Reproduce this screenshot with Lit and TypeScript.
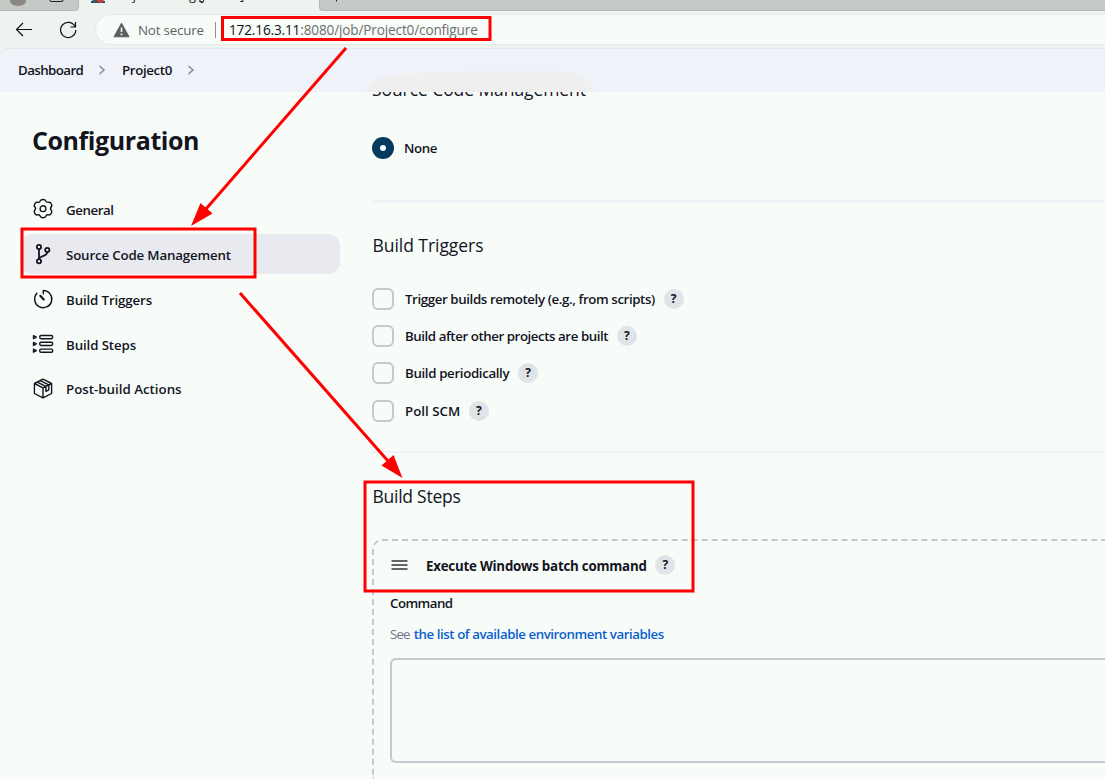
import { LitElement, html, css, svg } from "lit";
import { customElement } from "lit/decorators.js";

const gear = svg`<path d="M11 1.2c1.3 0 2.2.3 2.5 1.1.5 1.5 1.5 2 3 1.700 1.100-.2 1.800.2 2.500 1.500.8 1.300.8 2.200 0 3-1.100 1.300-1.100 2.200 0 3.500.8.9.8 1.800 0 3.100-.7 1.200-1.500 1.700-2.500 1.500-1.500-.3-2.500.2-3 1.700-.3.800-1.200 1.200-2.500 1.200s-2.200-.4-2.500-1.200c-.5-1.500-1.500-2-3-1.700-1 .2-1.800-.3-2.500-1.500-.8-1.300-.8-2.200 0-3.100 1.100-1.300 1.100-2.200 0-3.500-.8-.8-.8-1.700 0-3 .7-1.300 1.400-1.700 2.500-1.500 1.500.3 2.500-.2 3-1.700.3-.8 1.200-1.100 2.500-1.100z" transform="translate(-.3 .3) scale(1.030 1)"/><circle cx="11" cy="10.700" r="2.900"/>`;
const branch = svg`<g stroke-width="1.800"><circle cx="7" cy="4" r="2.100"/><circle cx="7" cy="18.200" r="2.100"/><circle cx="15.300" cy="7" r="2.100"/><path d="M7 6.100v10M15.300 9.200c0 4-5 2.800-8.300 6"/></g>`;
const timer = svg`<path d="M11.300 5.800V2.500a8.600 8.600 0 1 1-6.400 2.800"/><path d="M8.300 7.800l3.400 3.700" stroke-width="2.200"/>`;
const steps = svg`<path d="M1.500 2.600l2.800 1.500-2.800 1.500zM1.500 9.400l2.800 1.500-2.800 1.500zM1.500 16.200l2.800 1.500-2.800 1.500z"/><rect x="7.700" y="2.500" width="13" height="3.200" rx="1.400"/><rect x="7.700" y="9.300" width="13" height="3.200" rx="1.400"/><rect x="7.700" y="16.100" width="13" height="3.200" rx="1.400"/>`;
const box = svg`<path d="M11 2.200l8.600 4.300v10L11 20.900l-8.600-4.400v-10zM2.400 6.500L11 10.800l8.600-4.300M11 10.800v10.100M5.200 5.100l8.700 4.300M8.100 3.600l8.700 4.300v5l-2.900 1.500V9.400"/>`;

const menu = [
  { label: "General", icon: gear, cls: "k44" },
  { label: "Source Code Management", icon: branch, cls: "k16 on" },
  { label: "Build Triggers", icon: timer, cls: "k14" },
  { label: "Build Steps", icon: steps, cls: "k12" },
  { label: "Post-build Actions", icon: box, cls: "" },
];
const triggers = [
  { label: "Trigger builds remotely (e.g., from scripts)", cls: "k40" },
  { label: "Build after other projects are built", cls: "k44" },
  { label: "Build periodically", cls: "k36" },
  { label: "Poll SCM", cls: "" },
];

@customElement("browser-chrome")
class BrowserChrome extends LitElement {
  static styles = css`
    :host { display: block; background: #eef3ef; height: 48px; flex: none; font: 400 13.3px/20px "Open Sans", sans-serif; color: #5f625f; }
    .tabs { display: flex; height: 11px; overflow: hidden; }
    .idle { background: #c6cac6; box-sizing: border-box; border-bottom: 1px solid #b6bab6; flex: none; }
    .left { width: 79px; border-right: 1px solid #b6bab6; border-radius: 0 0 4px 0; }
    .right { flex: 1; border-left: 1px solid #b6bab6; border-radius: 0 0 0 4px; }
    .tab { width: 240px; flex: none; display: flex; color: #1a1c1a; }
    .tab svg { margin-left: 12px; flex: none; }
    .title { margin: -15px 0 0 9px; white-space: nowrap; font-size: 12.800px; letter-spacing: -.6px; }
    svg { display: block; }
    .bar { display: flex; height: 37px; box-sizing: border-box; padding: 3px 0 2px 14px; }
    .bar > svg { margin-top: 6px; flex: none; }
    .reload { margin-left: 22px; }
    .pill { margin-left: 15px; flex: 1; height: 31px; box-sizing: border-box; border: 1px solid #e6eae7; border-right: 0; border-radius: 16px 0 0 16px; background: #f8fcf9; display: flex; align-items: center; padding-left: 17px; white-space: nowrap; }
    .ns { margin-left: 8px; width: 77px; letter-spacing: -.15px; }
    .sep { width: 1px; height: 16px; background: #8d918e; }
    .url { margin-left: 13px; font-size: 13.6px; letter-spacing: -.15px; color: #6d706d; }
    .url b { font-weight: 400; color: #111; }
  `;
  render() {
    return html`
      <div class="tabs">
        <div class="idle left"><svg width="78" height="10"><ellipse cx="18" cy="1" rx="8" ry="5" fill="#8a8785"/><path d="M50 0q0 1.500 2 1.500h9q2 0 2-1.500" fill="none" stroke="#222" stroke-width="1.200"/></svg></div>
        <div class="tab">
          <svg width="14" height="4"><path d="M0 3V1l3-1h8l3 1v2z" fill="#35506b"/><path d="M5 0h7v2l-2 1-3-1z" fill="#c8402f"/></svg>
          <span class="title">Project0 Config [Jenkins]</span>
        </div>
        <div class="idle right"><svg width="40" height="4"><path d="M16.500 0v1.500" stroke="#222"/></svg></div>
      </div>
      <div class="bar">
        <svg width="20" height="20" fill="none" stroke="#111" stroke-width="1.200"><path d="M18 9.500H2.500M9 3L2.500 9.500 9 16"/></svg>
        <svg class="reload" width="24" height="20" fill="none" stroke="#111" stroke-width="1.200"><path d="M19 6.500a7.600 7.600 0 1 0 .8 3.500M19.500 2v5h-5"/></svg>
        <div class="pill">
          <svg width="17" height="16"><path d="M8.500 1.200L16 14.800H1z" fill="#5c605d" stroke="#5c605d" stroke-linejoin="round"/><path d="M8.500 5.500v4.500M8.500 11.500v1.800" stroke="#f8fcf9" stroke-width="1.600"/></svg>
          <span class="ns">Not secure</span><i class="sep"></i>
          <span class="url"><b>172.16.3.11</b>:8080/job/Project0/configure</span>
        </div>
      </div>`;
  }
}

@customElement("help-badge")
class HelpBadge extends LitElement {
  static styles = css`
    :host { display: block; flex: none; width: 20px; height: 20px; border-radius: 50%; background: #e0e3e7; color: #14141f; font: 700 12px/20px "Open Sans", sans-serif; text-align: center; }
  `;
  render() { return html`?`; }
}

@customElement("app-root")
class AppRoot extends LitElement {
  static styles = css`
    :host { display: flex; flex-direction: column; position: relative; width: 1105px; height: 779px; overflow: hidden; background: #f8fcf9; color: #14141f; font: 600 13.3px/20px "Open Sans", sans-serif; }
    svg { display: block; flex: none; }
    .k12 { letter-spacing: -.12px; } .k14 { letter-spacing: -.14px; } .k16 { letter-spacing: -.16px; }
    .k36 { letter-spacing: -.36px; } .k40 { letter-spacing: -.4px; }
    .k44 { letter-spacing: -.44px; } .k61 { letter-spacing: -.58px; }
    .crumbwrap { background: #eef3ef; flex: none; }
    .crumbs { height: 44px; box-sizing: border-box; border-top: 1px solid #e4e8e6; border-radius: 8px 0 0 0; background: #eff2f8; display: flex; align-items: center; padding: 0 0 1px 18px; overflow: hidden; }
    .crumbs span { white-space: nowrap; }
    .c1 { width: 80px; } .c2 { width: 65px; }
    .c1 + svg { margin-right: 16px; }
    .smudge { margin: 22px 0 -1px 171px; align-self: flex-start; }
    .main { flex: 1; display: flex; overflow: hidden; }
    aside { width: 320px; flex: none; padding: 31px 0 0 20px; }
    h1 { margin: 0 0 32px 12px; font: 700 25px/34px "Open Sans", sans-serif; letter-spacing: -.42px; }
    nav { display: flex; flex-direction: column; gap: 4.850px; }
    .item { height: 40px; border-radius: 12px; display: flex; align-items: center; gap: 12px; padding-left: 12px; white-space: nowrap; }
    .item span { margin-top: 2px; }
    .on { background: #e8eaf0; }
    .item svg { fill: none; stroke: #14141f; stroke-width: 1.400; stroke-linejoin: round; stroke-linecap: round; }
    .content { flex: 1; padding-left: 32px; white-space: nowrap; }
    h2 { margin: 31px 0 31px .5px; font: 520 17.500px/24px "Open Sans", sans-serif; letter-spacing: -.05px; }
    .steps { letter-spacing: -.26px; }
    .first { margin: -15px 0 36px; letter-spacing: -.08px; }
    .row { display: flex; align-items: center; height: 22px; }
    .row help-badge { margin-left: 8.800px; }
    .radio { width: 22px; height: 22px; box-sizing: border-box; border-radius: 50%; border: 8px solid #043a5f; background: #f8fcf9; margin-right: 10px; }
    .none { letter-spacing: -.4px; }
    hr { border: 0; height: 2px; background: #eff2f7; margin: 41px 0 0; }
    .list { display: flex; flex-direction: column; gap: 15.200px; height: 134px; }
    .list + hr { margin-top: 29px; }
    .check { width: 22px; height: 22px; box-sizing: border-box; border: 2px solid #c1cacf; border-radius: 6px; margin-right: 11px; }
    .step { border: 2px dashed #c1cacf; border-right: 0; border-bottom: 0; border-radius: 10px 0 0 0; padding: 13px 0 0 16px; height: 225px; }
    .grip { margin: 0 18.500px 0 .5px; }
    .exec { font-weight: 700; letter-spacing: -.22px; padding-top: 1px; }
    .cmd { margin-top: 17px; letter-spacing: -.55px; }
    .see { margin-top: 11px; font-weight: 400; color: #73738c; letter-spacing: -.85px; }
    .see a { color: #0a5fd0; font-weight: 600; letter-spacing: -.45px; margin-left: 1.500px; }
    .area { margin-top: 14px; height: 105px; box-sizing: border-box; border: 2px solid #c1cacf; border-right: 0; border-radius: 6px 0 0 6px; }
    .marks { position: absolute; left: 0; top: 0; fill: none; stroke: #fe0000; stroke-width: 3; }
    .marks .head { fill: #fe0000; stroke: none; }
  `;
  chevron() {
    return html`<svg width="8" height="12" fill="none" stroke="#85858f" stroke-width="1.400"><path d="M1.500 2l4.500 4-4.500 4"/></svg>`;
  }
  render() {
    return html`
      <browser-chrome></browser-chrome>
      <div class="crumbwrap"><div class="crumbs">
        <span class="c1 k61">Dashboard</span>${this.chevron()}
        <span class="c2 k36">Project0</span>${this.chevron()}
        <svg class="smudge" width="230" height="21"><path d="M0 21Q7 4 30 3Q60 3 100 0H195Q221 2 229 21z" fill="#efefef"/></svg>
      </div></div>
      <div class="main">
        <aside>
          <h1>Configuration</h1>
          <nav>${menu.map((m) => html`<div class="item ${m.cls}"><svg width="22" height="22">${m.icon}</svg><span>${m.label}</span></div>`)}</nav>
        </aside>
        <div class="content">
          <h2 class="first">Source Code Management</h2>
          <div class="row"><i class="radio"></i><span class="none">None</span></div>
          <hr />
          <h2>Build Triggers</h2>
          <div class="list">${triggers.map((t) => html`<div class="row"><i class="check"></i><span class=${t.cls}>${t.label}</span><help-badge></help-badge></div>`)}</div>
          <hr />
          <h2 class="steps">Build Steps</h2>
          <div class="step">
            <div class="row">
              <svg class="grip" width="17" height="10"><path d="M.5 1h16M.5 5h16M.5 9h16" stroke="#33333c" stroke-width="1.500"/></svg>
              <span class="exec">Execute Windows batch command</span><help-badge></help-badge>
            </div>
            <div class="cmd">Command</div>
            <div class="see">See <a>the list of available environment variables</a></div>
            <div class="area"></div>
          </div>
        </div>
      </div>
      <svg class="marks" width="1105" height="779">
        <rect x="222.500" y="17.500" width="267.500" height="22"/>
        <rect x="22" y="229" width="233" height="48"/>
        <rect x="365" y="482" width="328" height="109"/>
        <path d="M346 48L206 209M240 293L388 461"/>
        <path class="head" d="M191 226L200.500 203 212.500 213.500zM402.500 478L381.500 465.500 393.500 455z"/>
      </svg>`;
  }
}
